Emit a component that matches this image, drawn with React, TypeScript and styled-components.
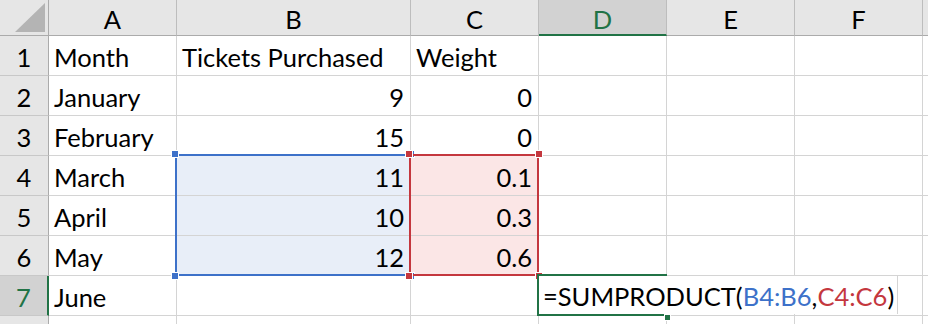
import styled, { createGlobalStyle } from 'styled-components'

const GlobalStyle = createGlobalStyle`
    body {
        margin: 0;
        background: #ffffff;
        overflow: hidden;
    }
`

// the last column and row only peek in at the edge, so they get no label
const COLS = ['A', 'B', 'C', 'D', 'E', 'F', '']
const WIDTHS = [128, 234, 128, 128, 128, 128, 128]
const ROW_COUNT = 8
const LABELLED_ROWS = 7

type Value = string | number
const DATA: Value[][] = [
    ['Month', 'Tickets Purchased', 'Weight'],
    ['January', 9, 0],
    ['February', 15, 0],
    ['March', 11, 0.1],
    ['April', 10, 0.3],
    ['May', 12, 0.6],
    ['June', '', ''],
]

const BLUE = '#3d71c9'
const RED = '#c4373e'
const GREEN = '#217346'

const App = () => {
    const rows = Array.from({ length: ROW_COUNT }, (_, i) => i + 1)

    const tintFor = (row: number, col: number) => {
        if (row >= 4 && row <= 6 && col === 1) return '#e8eef8'
        if (row >= 4 && row <= 6 && col === 2) return '#fbe6e6'
        return undefined
    }

    return (
        <>
            <GlobalStyle />
            <Sheet>
                <Corner>
                    <svg width="49" height="36" viewBox="0 0 49 36">
                        <polygon points="15,32 45,32 45,3" fill="#b4b4b4" />
                    </svg>
                </Corner>

                {COLS.map((c, i) => (
                    <ColHead key={i} $col={i + 2} $active={c === 'D'}>{c}</ColHead>
                ))}

                {rows.map((r) => (
                    <RowHead key={r} $row={r + 1} $active={r === 7}>
                        {r <= LABELLED_ROWS ? r : ''}
                    </RowHead>
                ))}

                {rows.map((r) =>
                    COLS.map((_, ci) => {
                        const value = DATA[r - 1]?.[ci]
                        const numeric = typeof value === 'number'
                        return (
                            <Cell
                                key={`${r}-${ci}`}
                                $row={r + 1}
                                $col={ci + 2}
                                $numeric={numeric}
                                $tint={tintFor(r, ci)}
                            >
                                {value ?? ''}
                            </Cell>
                        )
                    })
                )}

                {/* highlighted references of the formula being typed */}
                <RangeBox $color={BLUE} $col={3} $from={5} $to={8}>
                    <Handle $color={BLUE} $x="left" $y="top" />
                    <Handle $color={BLUE} $x="right" $y="top" />
                    <Handle $color={BLUE} $x="left" $y="bottom" />
                    <Handle $color={BLUE} $x="right" $y="bottom" />
                </RangeBox>
                <RangeBox $color={RED} $col={4} $from={5} $to={8}>
                    <Handle $color={RED} $x="left" $y="top" />
                    <Handle $color={RED} $x="right" $y="top" />
                    <Handle $color={RED} $x="left" $y="bottom" />
                    <Handle $color={RED} $x="right" $y="bottom" />
                </RangeBox>

                <ActiveCell>
                    <FillHandle />
                </ActiveCell>
                <Editor>
                    =SUMPRODUCT(<Ref $color={BLUE}>B4:B6</Ref>,<Ref $color={RED}>C4:C6</Ref>)
                </Editor>
            </Sheet>
        </>
    )
}

export default App

const Sheet = styled.div`
    display: grid;
    grid-template-columns: 49px ${WIDTHS.map((w) => `${w}px`).join(' ')};
    grid-template-rows: 36px repeat(${ROW_COUNT}, 40px);
    width: 928px;
    height: 324px;
    overflow: hidden;
    background: #ffffff;
    font-family: Lato, "Open Sans", sans-serif;
    font-size: 25.5px;
    color: #000000;
`

const Corner = styled.div`
    grid-row: 1;
    grid-column: 1;
    background: #e6e6e6;
    border-right: 1px solid #ababab;
    border-bottom: 1px solid #ababab;
    box-sizing: border-box;
    svg {
        display: block;
    }
`

const ColHead = styled.div<{ $col: number; $active?: boolean }>`
    grid-row: 1;
    grid-column: ${(p) => p.$col};
    box-sizing: border-box;
    display: flex;
    align-items: center;
    justify-content: center;
    padding-top: 3px;
    background: ${(p) => (p.$active ? '#d2d2d2' : '#e6e6e6')};
    color: ${(p) => (p.$active ? GREEN : '#000000')};
    border-right: 1px solid #bdbdbd;
    border-bottom: ${(p) => (p.$active ? `2px solid ${GREEN}` : '1px solid #ababab')};
`

const RowHead = styled.div<{ $row: number; $active?: boolean }>`
    grid-row: ${(p) => p.$row};
    grid-column: 1;
    box-sizing: border-box;
    display: flex;
    align-items: center;
    justify-content: center;
    padding-top: 2px;
    background: ${(p) => (p.$active ? '#d2d2d2' : '#e6e6e6')};
    color: ${(p) => (p.$active ? GREEN : '#000000')};
    border-right: ${(p) => (p.$active ? `2px solid ${GREEN}` : '1px solid #ababab')};
    border-bottom: 1px solid #c8c8c8;
`

const Cell = styled.div<{ $row: number; $col: number; $numeric?: boolean; $tint?: string }>`
    grid-row: ${(p) => p.$row};
    grid-column: ${(p) => p.$col};
    box-sizing: border-box;
    display: flex;
    align-items: center;
    justify-content: ${(p) => (p.$numeric ? 'flex-end' : 'flex-start')};
    padding: 2px 6px 0 5px;
    white-space: nowrap;
    background: ${(p) => p.$tint ?? '#ffffff'};
    border-right: 1px solid #d4d4d4;
    border-bottom: 1px solid #d4d4d4;
`

const RangeBox = styled.div<{ $color: string; $col: number; $from: number; $to: number }>`
    grid-column: ${(p) => p.$col};
    grid-row: ${(p) => p.$from} / ${(p) => p.$to};
    position: relative;
    margin: -2px 0 0 -2px;
    border: 2px solid ${(p) => p.$color};
    pointer-events: none;
`

const Handle = styled.span<{ $color: string; $x: 'left' | 'right'; $y: 'top' | 'bottom' }>`
    position: absolute;
    ${(p) => p.$x}: -5px;
    ${(p) => p.$y}: -5px;
    width: 6px;
    height: 6px;
    background: ${(p) => p.$color};
    outline: 1px solid #ffffff;
`

const ActiveCell = styled.div`
    grid-column: 5;
    grid-row: 8;
    position: relative;
    margin: -2px 0 0 -2px;
    border: 2px solid ${GREEN};
`

const FillHandle = styled.span`
    position: absolute;
    right: -5px;
    bottom: -6px;
    width: 5px;
    height: 5px;
    background: ${GREEN};
    outline: 1px solid #ffffff;
    z-index: 3;
`

const Editor = styled.div`
    grid-column: 5 / 9;
    grid-row: 8;
    justify-self: start;
    align-self: start;
    position: relative;
    z-index: 2;
    box-sizing: border-box;
    height: 38px;
    display: flex;
    align-items: center;
    padding: 2px 3px 0 4px;
    background: #ffffff;
    border-right: 1px solid #d4d4d4;
    white-space: nowrap;
`

const Ref = styled.span<{ $color: string }>`
    color: ${(p) => p.$color};
`
